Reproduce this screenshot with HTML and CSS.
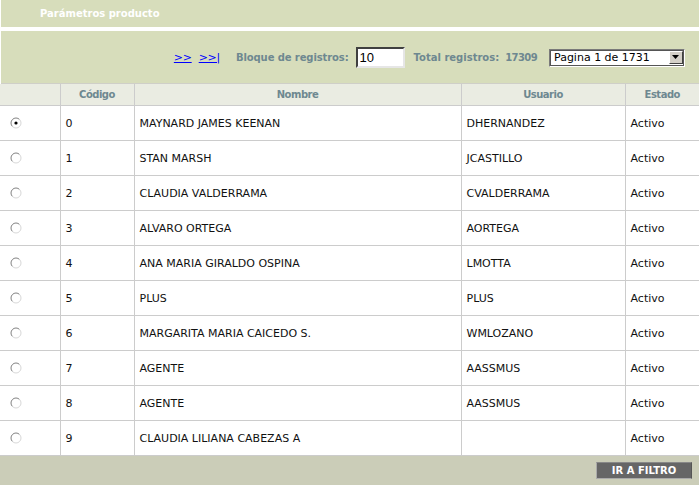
FILE: index.html
```html
<!DOCTYPE html>
<html>
<head>
<meta charset="utf-8">
<link rel="stylesheet" href="styles.css">
</head>
<body>
<div class="page">
  <div class="titlebar">Parámetros producto</div>
  <div class="toolbar">
    <a class="nav" href="#">&gt;&gt;</a>
    <a class="nav nav-last" href="#">&gt;&gt;|</a>
    <span class="lbl lbl-bloque">Bloque de registros:</span>
    <input class="bloque" type="text" value="10">
    <span class="lbl lbl-total">Total registros:</span>
    <span class="lbl lbl-num">17309</span>
    <div class="select">
      <span class="select-text">Pagina 1 de 1731</span>
      <span class="select-btn"><svg width="8" height="5" viewBox="0 0 8 5"><path d="M0 0H7L3.5 4Z" fill="#000"/></svg></span>
    </div>
  </div>
  <table class="grid">
    <colgroup>
      <col class="c-radio"><col class="c-cod"><col class="c-nom"><col class="c-usr"><col class="c-est">
    </colgroup>
    <thead>
      <tr><th></th><th>Código</th><th>Nombre</th><th>Usuario</th><th class="th-est">Estado</th></tr>
    </thead>
    <tbody>
      <tr><td class="rcell"><svg class="radio" width="12" height="12" viewBox="0 0 12 12"><circle cx="6" cy="6" r="5" fill="#fff"/><path d="M2.46 9.54A5 5 0 0 1 9.54 2.46" stroke="#808080" fill="none"/><path d="M9.54 2.46A5 5 0 0 1 2.46 9.54" stroke="#d8d8d8" fill="none"/><circle cx="6" cy="6" r="1.6" fill="#000"/></svg></td><td>0</td><td>MAYNARD JAMES KEENAN</td><td>DHERNANDEZ</td><td>Activo</td></tr>
      <tr><td class="rcell"><svg class="radio" width="12" height="12" viewBox="0 0 12 12"><circle cx="6" cy="6" r="5" fill="#fff"/><path d="M2.46 9.54A5 5 0 0 1 9.54 2.46" stroke="#808080" fill="none"/><path d="M9.54 2.46A5 5 0 0 1 2.46 9.54" stroke="#d8d8d8" fill="none"/></svg></td><td>1</td><td>STAN MARSH</td><td>JCASTILLO</td><td>Activo</td></tr>
      <tr><td class="rcell"><svg class="radio" width="12" height="12" viewBox="0 0 12 12"><circle cx="6" cy="6" r="5" fill="#fff"/><path d="M2.46 9.54A5 5 0 0 1 9.54 2.46" stroke="#808080" fill="none"/><path d="M9.54 2.46A5 5 0 0 1 2.46 9.54" stroke="#d8d8d8" fill="none"/></svg></td><td>2</td><td>CLAUDIA VALDERRAMA</td><td>CVALDERRAMA</td><td>Activo</td></tr>
      <tr><td class="rcell"><svg class="radio" width="12" height="12" viewBox="0 0 12 12"><circle cx="6" cy="6" r="5" fill="#fff"/><path d="M2.46 9.54A5 5 0 0 1 9.54 2.46" stroke="#808080" fill="none"/><path d="M9.54 2.46A5 5 0 0 1 2.46 9.54" stroke="#d8d8d8" fill="none"/></svg></td><td>3</td><td>ALVARO ORTEGA</td><td>AORTEGA</td><td>Activo</td></tr>
      <tr><td class="rcell"><svg class="radio" width="12" height="12" viewBox="0 0 12 12"><circle cx="6" cy="6" r="5" fill="#fff"/><path d="M2.46 9.54A5 5 0 0 1 9.54 2.46" stroke="#808080" fill="none"/><path d="M9.54 2.46A5 5 0 0 1 2.46 9.54" stroke="#d8d8d8" fill="none"/></svg></td><td>4</td><td>ANA MARIA GIRALDO OSPINA</td><td>LMOTTA</td><td>Activo</td></tr>
      <tr><td class="rcell"><svg class="radio" width="12" height="12" viewBox="0 0 12 12"><circle cx="6" cy="6" r="5" fill="#fff"/><path d="M2.46 9.54A5 5 0 0 1 9.54 2.46" stroke="#808080" fill="none"/><path d="M9.54 2.46A5 5 0 0 1 2.46 9.54" stroke="#d8d8d8" fill="none"/></svg></td><td>5</td><td>PLUS</td><td>PLUS</td><td>Activo</td></tr>
      <tr><td class="rcell"><svg class="radio" width="12" height="12" viewBox="0 0 12 12"><circle cx="6" cy="6" r="5" fill="#fff"/><path d="M2.46 9.54A5 5 0 0 1 9.54 2.46" stroke="#808080" fill="none"/><path d="M9.54 2.46A5 5 0 0 1 2.46 9.54" stroke="#d8d8d8" fill="none"/></svg></td><td>6</td><td>MARGARITA MARIA CAICEDO S.</td><td>WMLOZANO</td><td>Activo</td></tr>
      <tr><td class="rcell"><svg class="radio" width="12" height="12" viewBox="0 0 12 12"><circle cx="6" cy="6" r="5" fill="#fff"/><path d="M2.46 9.54A5 5 0 0 1 9.54 2.46" stroke="#808080" fill="none"/><path d="M9.54 2.46A5 5 0 0 1 2.46 9.54" stroke="#d8d8d8" fill="none"/></svg></td><td>7</td><td>AGENTE</td><td>AASSMUS</td><td>Activo</td></tr>
      <tr><td class="rcell"><svg class="radio" width="12" height="12" viewBox="0 0 12 12"><circle cx="6" cy="6" r="5" fill="#fff"/><path d="M2.46 9.54A5 5 0 0 1 9.54 2.46" stroke="#808080" fill="none"/><path d="M9.54 2.46A5 5 0 0 1 2.46 9.54" stroke="#d8d8d8" fill="none"/></svg></td><td>8</td><td>AGENTE</td><td>AASSMUS</td><td>Activo</td></tr>
      <tr><td class="rcell"><svg class="radio" width="12" height="12" viewBox="0 0 12 12"><circle cx="6" cy="6" r="5" fill="#fff"/><path d="M2.46 9.54A5 5 0 0 1 9.54 2.46" stroke="#808080" fill="none"/><path d="M9.54 2.46A5 5 0 0 1 2.46 9.54" stroke="#d8d8d8" fill="none"/></svg></td><td>9</td><td>CLAUDIA LILIANA CABEZAS A</td><td></td><td>Activo</td></tr>
    </tbody>
  </table>
  <div class="footer">
    <button class="filtro">IR A FILTRO</button>
  </div>
</div>
</body>
</html>
```

FILE: styles.css
```css
html, body {
  margin: 0;
  padding: 0;
  background: #fff;
}
.page {
  width: 699px;
  height: 485px;
  overflow: hidden;
  font-family: "DejaVu Sans", Verdana, sans-serif;
  font-size: 11px;
}
.titlebar {
  margin-left: 1px;
  height: 27px;
  line-height: 27px;
  background: #d7ddbb;
  color: #fff;
  font-weight: bold;
  font-size: 10px;
  padding-left: 39px;
  box-sizing: border-box;
}
.toolbar {
  margin-top: 4px;
  margin-left: 1px;
  height: 53px;
  background: #d7ddbb;
  display: flex;
  align-items: center;
  justify-content: flex-end;
  padding-right: 14px;
  padding-top: 1px;
  box-sizing: border-box;
  border-bottom: 1px solid #cfcfc8;
}
.nav {
  color: #0000ff;
  text-decoration: underline;
  font-size: 11px;
  font-family: "DejaVu Sans", Verdana, sans-serif;
  margin-right: 7px;
  letter-spacing: -0.3px;
}
.nav-last {
  margin-right: 16px;
}
.lbl {
  color: #6e8890;
  font-weight: bold;
  font-size: 10px;
}
.lbl-bloque { margin-right: 7px; letter-spacing: -0.1px; }
.lbl-total { margin-left: 9px; margin-right: 6px; }
.lbl-num { margin-right: 12px; letter-spacing: -0.6px; }
.bloque {
  width: 49px;
  height: 21px;
  box-sizing: border-box;
  border: 2px solid;
  border-color: #404040 #e6e6e6 #e6e6e6 #404040;
  padding: 0 2px;
  font-family: "Liberation Sans", Arial, sans-serif;
  font-size: 13px;
  color: #000;
  background: #fff;
}
.select {
  width: 136px;
  height: 18px;
  box-sizing: border-box;
  border: 1px solid;
  border-color: #7a7a7a #fff #fff #7a7a7a;
  outline: 1px solid #555;
  outline-offset: -2px;
  background: #fff;
  display: flex;
  align-items: center;
  justify-content: space-between;
  padding: 0 1px 0 4px;
}
.select-text {
  font-size: 11px;
  color: #000;
}
.select-btn {
  width: 14px;
  height: 13px;
  box-sizing: border-box;
  background: #d4d0c8;
  border: 1px solid;
  border-color: #fff #404040 #404040 #fff;
  display: flex;
  align-items: center;
  justify-content: center;
}
.grid {
  width: 699px;
  border-collapse: collapse;
  table-layout: fixed;
}
.c-radio { width: 60px; }
.c-cod { width: 74px; }
.c-nom { width: 327px; }
.c-usr { width: 164px; }
.c-est { width: 74px; }
.grid th {
  height: 21px;
  background: #eaece2;
  color: #6e8890;
  font-weight: bold;
  font-size: 10px;
  letter-spacing: -0.5px;
  text-align: center;
  padding: 0;
  border-right: 1px solid #cccccc;
  border-bottom: 1px solid #cccccc;
}
.grid th.th-est {
  border-right: none;
}
.grid td {
  height: 34px;
  padding: 0 5px;
  color: #111;
  font-size: 11px;
  border-right: 1px solid #cccccc;
  border-bottom: 1px solid #cccccc;
  white-space: nowrap;
  overflow: hidden;
}
.grid td:last-child { border-right: none; }
.grid td.rcell {
  padding: 0 0 0 10px;
}
.radio {
  display: block;
}
.footer {
  height: 30px;
  background: #cbcdb8;
  display: flex;
  justify-content: flex-end;
  align-items: flex-start;
  padding: 6px 7px 0 0;
  box-sizing: border-box;
}
.filtro {
  width: 96px;
  height: 17px;
  background: #666666;
  color: #fff;
  font-family: "DejaVu Sans", Verdana, sans-serif;
  font-weight: bold;
  font-size: 10px;
  border: 1px solid;
  border-color: #888 #555 #aaa #aaa;
  padding: 0;
  line-height: 14px;
}
```
